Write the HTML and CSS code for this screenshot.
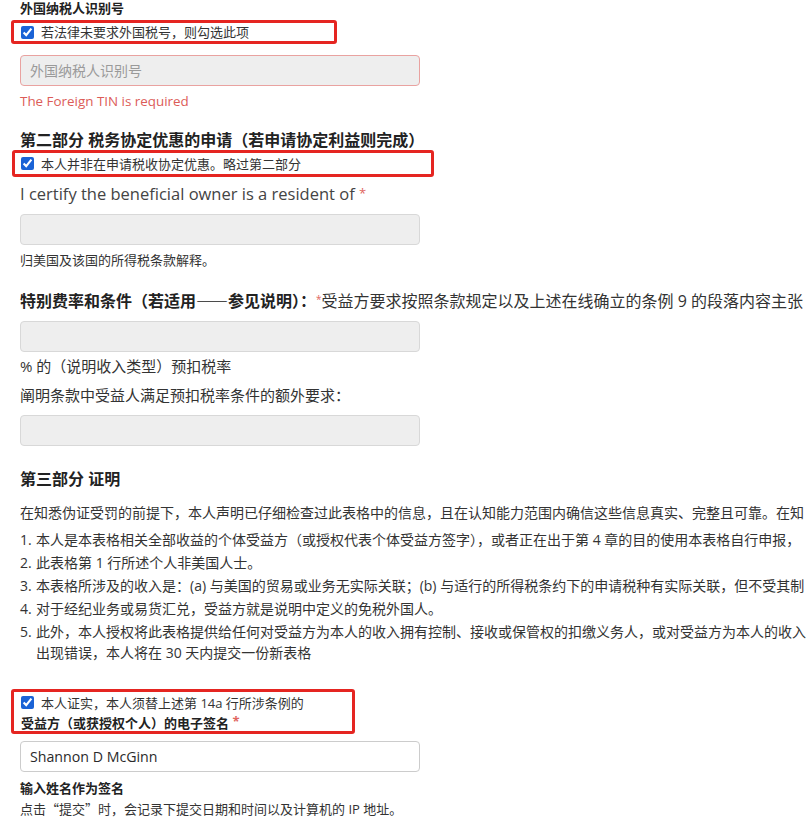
FILE: index.html
```html
<!DOCTYPE html>
<html lang="zh-CN">
<head>
<meta charset="utf-8">
<title>W-8BEN</title>
<link rel="stylesheet" href="styles.css">
</head>
<body>
<div class="page">
  <div class="field-label">外国纳税人识别号</div>
  <label class="hl hl-1">
    <input type="checkbox" class="cb" checked>
    <span class="cb-text">若法律未要求外国税号，则勾选此项</span>
  </label>
  <input type="text" class="inp inp-error inp-1" placeholder="外国纳税人识别号" disabled>
  <div class="error">The Foreign TIN is required</div>

  <h2 class="sec-title sec-2">第二部分 税务协定优惠的申请（若申请协定利益则完成）</h2>
  <label class="hl hl-2">
    <input type="checkbox" class="cb" checked>
    <span class="cb-text">本人并非在申请税收协定优惠。略过第二部分</span>
  </label>
  <div class="big-label">I certify the beneficial owner is a resident of <span class="req">*</span></div>
  <input type="text" class="inp inp-2" disabled>
  <div class="help help-2">归美国及该国的所得税条款解释。</div>

  <div class="rate-line"><strong class="rate-label">特别费率和条件（若适用<span class="cjk">——</span>参见说明）：</strong><span class="req req-sm">*</span>受益方要求按照条款规定以及上述在线确立的条例 9 的段落内容主张</div>
  <input type="text" class="inp inp-3" disabled>
  <div class="mid-text mid-1">% 的（说明收入类型）预扣税率</div>
  <div class="mid-text mid-2">阐明条款中受益人满足预扣税率条件的额外要求：</div>
  <input type="text" class="inp inp-4" disabled>

  <h2 class="sec-title sec-3">第三部分 证明</h2>
  <p class="para">在知悉伪证受罚的前提下，本人声明已仔细检查过此表格中的信息，且在认知能力范围内确信这些信息真实、完整且可靠。在知</p>
  <ol class="list">
    <li><span class="num">1.</span><span>本人是本表格相关全部收益的个体受益方（或授权代表个体受益方签字），或者正在出于第 4 章的目的使用本表格自行申报，</span></li>
    <li><span class="num">2.</span><span>此表格第 1 行所述个人非美国人士。</span></li>
    <li><span class="num">3.</span><span>本表格所涉及的收入是：(a) 与美国的贸易或业务无实际关联；(b) 与适行的所得税条约下的申请税种有实际关联，但不受其制</span></li>
    <li><span class="num">4.</span><span>对于经纪业务或易货汇兑，受益方就是说明中定义的免税外国人。</span></li>
    <li><span class="num">5.</span><span>此外，本人授权将此表格提供给任何对受益方为本人的收入拥有控制、接收或保管权的扣缴义务人，或对受益方为本人的收入<br>出现错误，本人将在 30 天内提交一份新表格</span></li>
  </ol>

  <div class="hl hl-3">
    <label class="cb-row">
      <input type="checkbox" class="cb" checked>
      <span class="cb-text">本人证实，本人须替上述第 14a 行所涉条例的</span>
    </label>
    <div class="sig-label">受益方（或获授权个人）的电子签名 <span class="req">*</span></div>
  </div>
  <input type="text" class="inp inp-5" value="Shannon D McGinn">
  <div class="field-label sig-hint">输入姓名作为签名</div>
  <div class="help help-last">点击<span class="cjk">“</span>提交<span class="cjk">”</span>时，会记录下提交日期和时间以及计算机的 IP 地址。</div>
</div>
</body>
</html>
```

FILE: styles.css
```css
html, body {
  margin: 0;
  padding: 0;
  overflow: hidden;
  background: #ffffff;
}

body {
  font-family: "Open Sans", "Noto Sans CJK SC", sans-serif;
  color: #333333;
}

.page {
  padding-left: 20px;
  width: 791px;
  overflow: hidden;
}

.cjk {
  font-family: "Noto Sans CJK SC", sans-serif;
}

.field-label {
  font-size: 13px;
  font-weight: 700;
  line-height: 16px;
  color: #222222;
}

.hl {
  display: flex;
  align-items: center;
  box-sizing: border-box;
  border: 3px solid #e52521;
  border-radius: 3px;
  margin-left: -9px;
  padding-left: 7px;
}

.hl-1 {
  width: 326px;
  height: 24px;
  margin-top: 4px;
}

.hl-2 {
  width: 422px;
  height: 27px;
  margin-left: -8px;
  padding-left: 6px;
}

.hl-3 {
  display: block;
  width: 344px;
  height: 45px;
  margin-top: 26px;
  padding-top: 1px;
}

.cb {
  width: 13px;
  height: 13px;
  margin: 0 7px 0 0;
  accent-color: #1a63d6;
  flex: none;
}

.cb-text {
  font-size: 13px;
  line-height: 18px;
  color: #333333;
}

.cb-row {
  display: flex;
  align-items: center;
  height: 19px;
}

.sig-label {
  font-size: 13px;
  font-weight: 700;
  line-height: 19px;
  color: #222222;
}

.inp {
  display: block;
  box-sizing: border-box;
  width: 400px;
  height: 31px;
  border: 1px solid #d8d8d8;
  border-radius: 4px;
  background: #eeeeee;
  padding: 0 9px;
  font-family: "Open Sans", "Noto Sans CJK SC", sans-serif;
  font-size: 14px;
  color: #333333;
  outline: none;
}

.inp::placeholder {
  color: #9a9a9a;
}

.inp-error {
  border-color: #e9a2a0;
}

.inp-1 { margin-top: 11px; }
.inp-2 { margin-top: 8px; }
.inp-3 { margin-top: 9px; }
.inp-4 { margin-top: 9px; }

.inp-5 {
  margin-top: 7px;
  background: #ffffff;
  border-color: #cccccc;
  font-size: 14.2px;
  color: #2a2a2a;
}

.error {
  font-size: 13.4px;
  line-height: 18px;
  margin-top: 6px;
  color: #dc5c58;
}

.sec-title {
  margin: 0;
  font-size: 16px;
  font-weight: 700;
  color: #222222;
}

.sec-2 {
  line-height: 20px;
  margin-top: 20px;
}

.sec-3 {
  line-height: 22px;
  margin-top: 22px;
}

.big-label {
  font-size: 16.5px;
  line-height: 24px;
  margin-top: 4px;
  color: #444444;
}

.req {
  color: #e06660;
  font-size: 13px;
  vertical-align: 2px;
}

.req-sm {
  font-size: 10px;
  vertical-align: 4px;
}

.help {
  font-size: 13px;
  line-height: 18px;
  color: #333333;
}

.help-2 { margin-top: 6px; }

.rate-line {
  font-size: 16px;
  line-height: 22px;
  margin-top: 19px;
  white-space: nowrap;
  color: #333333;
}

.rate-label {
  color: #222222;
}

.mid-text {
  font-size: 15px;
  line-height: 22px;
  color: #333333;
}

.mid-1 { margin-top: 3px; }
.mid-2 { margin-top: 7px; }

.para {
  font-size: 14px;
  line-height: 21px;
  margin: 12px 0 0;
  white-space: nowrap;
}

.list {
  list-style: none;
  margin: 6px 0 0;
  padding: 0;
  font-size: 14px;
  line-height: 21px;
}

.list li {
  display: flex;
  white-space: nowrap;
  margin-bottom: 2px;
}

.list .num {
  flex: none;
  width: 16px;
}

.sig-hint {
  line-height: 18px;
  margin-top: 7px;
}

.help-last {
  margin-top: 3px;
}
```
